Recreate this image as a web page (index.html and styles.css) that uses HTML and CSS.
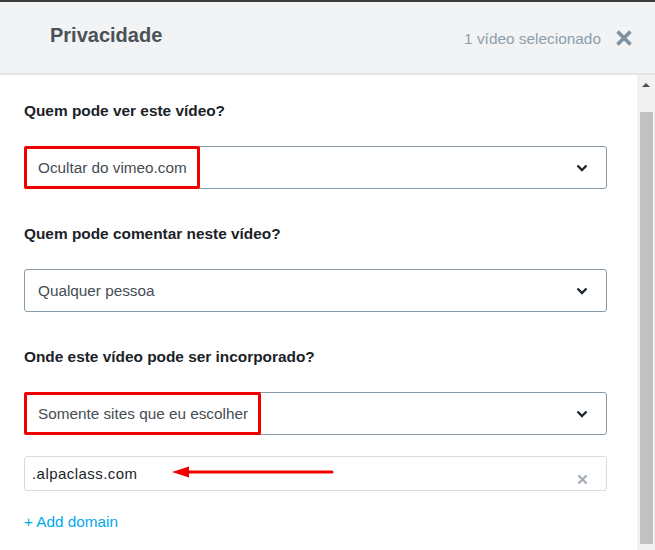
FILE: index.html
```html
<!DOCTYPE html>
<html lang="pt">
<head>
    <meta charset="UTF-8">
    <title>Privacidade</title>
    <link rel="stylesheet" href="styles.css">
</head>
<body>
<div class="modal">
    <div class="head">
        <div class="head-title">Privacidade</div>
        <div class="head-right">
            <span class="count">1 vídeo selecionado</span>
            <svg class="close" width="18" height="18" viewBox="0 0 18 18">
                <path d="M2.5 2.5 L15.5 15.5 M15.5 2.5 L2.5 15.5" stroke="#7d91a1" stroke-width="3.6" stroke-linecap="butt"/>
            </svg>
        </div>
    </div>

    <div class="main">
        <div class="content">
            <div class="label">Quem pode ver este vídeo?</div>
            <div class="select">
                <span class="value marked">Ocultar do vimeo.com</span>
                <svg class="chevron" width="12" height="8" viewBox="0 0 12 8"><path d="M1.5 1.5 L6 6 L10.5 1.5" fill="none" stroke="#1e272e" stroke-width="2.4"/></svg>
            </div>

            <div class="label">Quem pode comentar neste vídeo?</div>
            <div class="select">
                <span class="value">Qualquer pessoa</span>
                <svg class="chevron" width="12" height="8" viewBox="0 0 12 8"><path d="M1.5 1.5 L6 6 L10.5 1.5" fill="none" stroke="#1e272e" stroke-width="2.4"/></svg>
            </div>

            <div class="label">Onde este vídeo pode ser incorporado?</div>
            <div class="select last">
                <span class="value marked">Somente sites que eu escolher</span>
                <svg class="chevron" width="12" height="8" viewBox="0 0 12 8"><path d="M1.5 1.5 L6 6 L10.5 1.5" fill="none" stroke="#1e272e" stroke-width="2.4"/></svg>
            </div>

            <div class="domain">
                <span class="domain-text">.alpaclass.com</span>
                <svg class="domain-x" width="11" height="11" viewBox="0 0 11 11"><path d="M1.5 1.5 L9.5 9.5 M9.5 1.5 L1.5 9.5" stroke="#a3adb6" stroke-width="2.2"/></svg>
                <!-- seta vermelha por cima do campo -->
                <svg class="arrow" width="162" height="14" viewBox="0 0 162 14">
                    <path d="M0 7 L17 1.5 L17 12.5 Z" fill="#f00000"/>
                    <path d="M15 7 L160 7" stroke="#f00000" stroke-width="3" stroke-linecap="round"/>
                </svg>
            </div>

            <a class="add" href="#">+ Add domain</a>
        </div>

        <div class="scrollbar">
            <div class="scroll-up"></div>
            <div class="thumb"></div>
        </div>
    </div>
</div>
</body>
</html>
```

FILE: styles.css
```css
body{
    margin: 0;
    background: #fff;
    font-family: "Liberation Sans", Arial, sans-serif;
}
.modal{
    border-top: 2px solid #3b3b3b;
    height: 548px;
    overflow: hidden;
}
.head{
    display: flex;
    align-items: center;
    justify-content: space-between;
    height: 71px;
    padding: 0 22px 0 50px;
    background: #f2f3f5;
    border-bottom: 2px solid #e2e6e9;
}
.head-title{
    font-size: 20px;
    font-weight: bold;
    color: #4a5157;
    padding-bottom: 4px;
}
.head-right{
    display: flex;
    align-items: center;
    gap: 14px;
}
.count{
    font-size: 15.4px;
    color: #8d9eab;
    padding-top: 3px;
}
.close{
    display: block;
}
.main{
    display: flex;
    height: 475px;
}
.content{
    flex: 1;
    padding: 27px 30px 0 24px;
}
.label{
    font-size: 15.4px;
    line-height: 18px;
    font-weight: bold;
    color: #1b2228;
    margin-bottom: 26px;
}
.select{
    display: flex;
    align-items: stretch;
    justify-content: space-between;
    height: 41px;
    border: 1px solid #8a99a6;
    border-radius: 3px;
    margin-bottom: 36px;
}
.select.last{
    margin-bottom: 21px;
}
.select .value{
    display: flex;
    align-items: center;
    padding-left: 13px;
    font-size: 15.3px;
    color: #454d54;
}
.select .value.marked{
    margin: -1px 0 -1px -1px;
    padding: 0 10px 0 11px;
    border: 3px solid #f00000;
    border-radius: 2px;
}
.chevron{
    align-self: center;
    margin-right: 18px;
}
.domain{
    position: relative;
    display: flex;
    align-items: center;
    justify-content: space-between;
    height: 33px;
    border: 1px solid #d6dce1;
    border-radius: 3px;
    padding: 0 18px 0 7px;
    margin-bottom: 22px;
}
.domain-text{
    font-size: 15px;
    color: #1b2228;
    letter-spacing: 0.45px;
    margin-top: -1px;
}
.domain-x{
    margin-top: 11px;
}
.arrow{
    position: absolute;
    left: 147px;
    top: 8px;
}
.add{
    font-size: 15.3px;
    color: #00a9ee;
    text-decoration: none;
}
.scrollbar{
    width: 18px;
    background: #f1f1f1;
    display: flex;
    flex-direction: column;
}
.scroll-up{
    height: 17px;
    position: relative;
}
.scroll-up:after{
    content: "";
    position: absolute;
    left: 5px;
    top: 8px;
    border-left: 4px solid transparent;
    border-right: 4px solid transparent;
    border-bottom: 4px solid #505050;
}
.thumb{
    margin: 20px 2px 0 3px;
    height: 432px;
    background: #c1c1c1;
}
```
